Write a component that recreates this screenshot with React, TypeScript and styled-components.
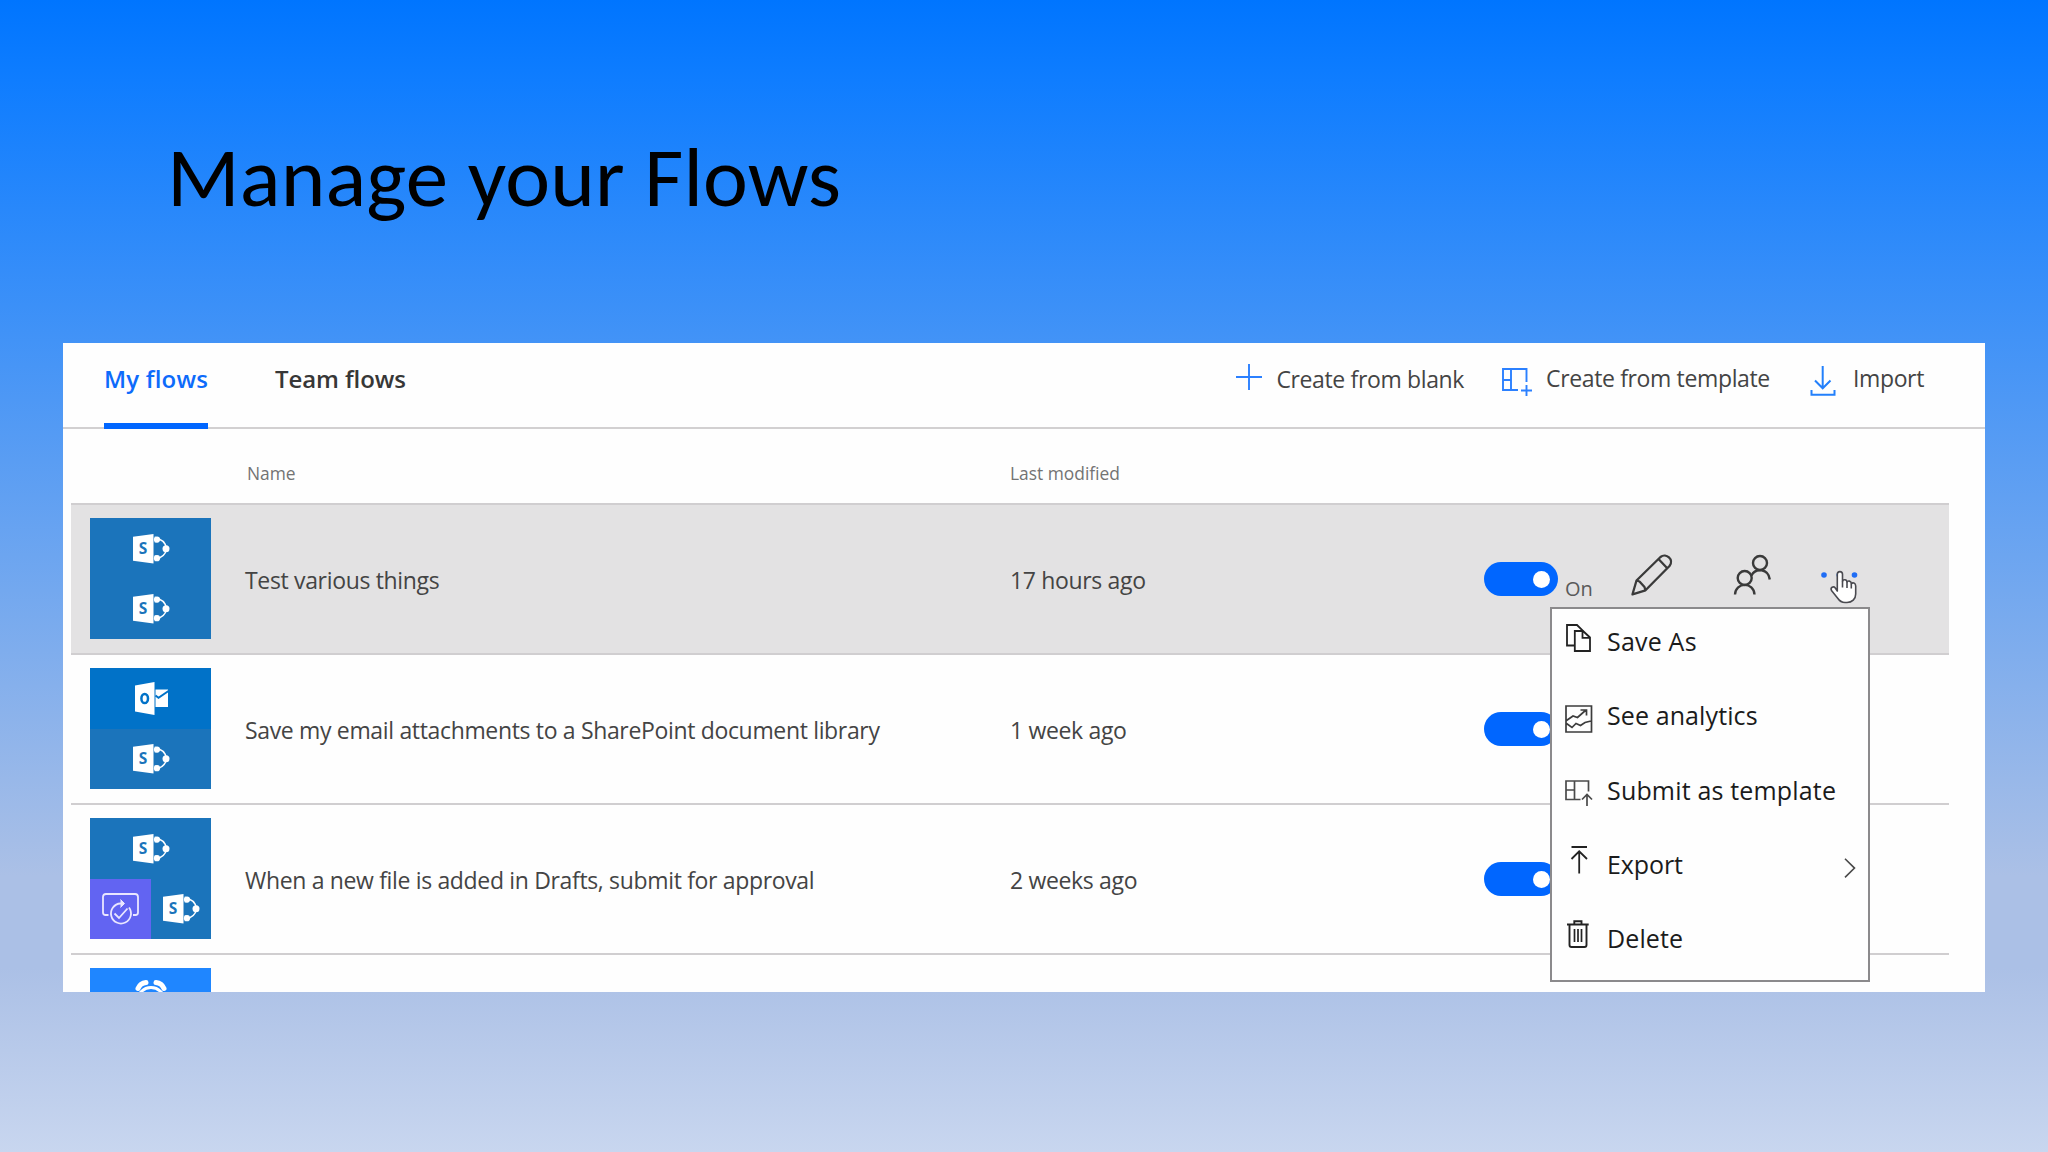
import React from "react";
import styled, { createGlobalStyle } from "styled-components";

const GlobalStyle = createGlobalStyle`
  * { box-sizing: border-box; }
  body { margin: 0; overflow: hidden; }
  svg { display: block; flex: none; overflow: visible; }
`;

const Slide = styled.main`
  display: flex;
  flex-direction: column;
  width: 2048px;
  height: 1152px;
  background: linear-gradient(180deg, #0075ff 0%, #0f7dff 7%, #abc0e6 76%, #abc0e6 84%, #c8d6ef 100%);
  font-family: "Open Sans", "Noto Sans", sans-serif;
  color: #444;
`;

const SlideHeader = styled.header`
  flex: none;
  height: 343px;
  padding: 125px 0 0 167px;
`;

const Title = styled.h1`
  margin: 0;
  font-family: Carlito, Lato, sans-serif;
  font-weight: 400;
  font-size: 85px;
  line-height: 104px;
  letter-spacing: 0.15px;
  color: #000;
  white-space: nowrap;
`;

const Panel = styled.section`
  position: relative;
  flex: none;
  display: flex;
  flex-direction: column;
  width: 1922px;
  height: 649px;
  margin-left: 63px;
  overflow: hidden;
  background: #fefefe;
`;

const TabBar = styled.nav`
  flex: none;
  display: flex;
  justify-content: space-between;
  height: 86px;
  padding: 0 61px 0 41px;
  border-bottom: 2px solid #d2d0d1;
`;

const Tabs = styled.div`
  display: flex;
  gap: 67px;
`;

const Tab = styled.div<{ $active?: boolean }>`
  height: 86px;
  padding-top: 20px;
  font-size: 24px;
  line-height: 32px;
  font-weight: 600;
  letter-spacing: ${(p) => (p.$active ? 0.2 : -0.1)}px;
  white-space: nowrap;
  color: ${(p) => (p.$active ? "#0d6bfb" : "#373737")};
  border-bottom: 6px solid ${(p) => (p.$active ? "#0066ff" : "transparent")};
`;

const Actions = styled.div`
  display: flex;
  align-items: flex-start;
  padding-top: 20px;
`;

const Action = styled.button<{ $gap: number; $before?: number }>`
  display: flex;
  align-items: flex-start;
  gap: ${(p) => p.$gap}px;
  margin: 0 0 0 ${(p) => p.$before ?? 0}px;
  padding: 0;
  border: 0;
  background: none;
  font: 400 23px/32px "Open Sans", "Noto Sans", sans-serif;
  letter-spacing: -0.36px;
  color: #444;
  white-space: nowrap;

  &:not(:first-child) { margin-top: -1px; }
`;

const columns = "174px 765px 474px 1fr";

const ColumnHeads = styled.div`
  flex: none;
  display: grid;
  grid-template-columns: ${columns};
  align-items: center;
  height: 74px;
  margin-left: 8px;
  padding-top: 14px;
  font-size: 17.4px;
  line-height: 24px;
  color: #737373;
`;

const HeadLabel = styled.span<{ $inset: number }>`
  padding-left: ${(p) => p.$inset}px;
`;

const Row = styled.div<{ $selected?: boolean }>`
  flex: none;
  display: grid;
  grid-template-columns: ${columns};
  align-items: center;
  width: 1878px;
  height: ${(p) => (p.$selected ? 152 : 150)}px;
  margin-left: 8px;
  border-bottom: 2px solid #d0ced0;
  border-top: ${(p) => (p.$selected ? "2px solid #d0ced0" : "0")};
  background: ${(p) => (p.$selected ? "#e3e2e3" : "transparent")};
`;

const Cell = styled.div`
  padding-top: 2px;
  font-size: 23px;
  line-height: 32px;
  letter-spacing: -0.34px;
  white-space: nowrap;
`;

const Tile = styled.div`
  display: flex;
  flex-wrap: wrap;
  width: 121px;
  height: 121px;
  margin: 0 0 1px 19px;
`;

const TileCell = styled.div<{ $color: string; $half?: boolean }>`
  display: flex;
  align-items: center;
  justify-content: center;
  width: ${(p) => (p.$half ? "50%" : "100%")};
  height: 50%;
  padding: 1px 0 0 1px;
  background: ${(p) => p.$color};
`;

const Controls = styled.div`
  display: flex;
  align-items: center;
  height: 100%;
`;

const Toggle = styled.span`
  flex: none;
  display: flex;
  align-items: center;
  justify-content: flex-end;
  width: 74px;
  height: 34px;
  padding-right: 8px;
  border-radius: 17px;
  background: #0066ff;

  &::after {
    content: "";
    width: 17px;
    height: 17px;
    border-radius: 50%;
    background: #fff;
  }
`;

const ToggleLabel = styled.span`
  width: 73px;
  padding: 19px 0 0 7px;
  font-size: 20px;
  line-height: 26px;
  color: #5a5a5a;
`;

const IconButton = styled.span<{ $width: number }>`
  display: flex;
  width: ${(p) => p.$width}px;
  padding-bottom: 8px;
`;

const Menu = styled.ul`
  position: absolute;
  left: 1487px;
  top: 264px;
  display: flex;
  flex-direction: column;
  gap: 34.3px;
  width: 320px;
  height: 375px;
  margin: 0;
  padding: 12px 12px 0 13px;
  list-style: none;
  background: #fefefe;
  border: 2px solid #8b8a8c;
`;

const MenuItem = styled.li<{ $iconShift: number }>`
  display: flex;
  align-items: center;
  gap: 14px;
  height: 40px;
  font-size: 25px;
  line-height: 40px;
  color: #1b1b1b;
  white-space: nowrap;

  > svg:first-child { margin-top: ${(p) => p.$iconShift * 2}px; }
`;

const MenuText = styled.span<{ $tracking: number }>`
  flex: 1;
  letter-spacing: ${(p) => p.$tracking}px;
`;

const Pointer = styled.span`
  position: absolute;
  left: 1766px;
  top: 226px;
`;

const Sharepoint = () => (
  <svg width="37" height="30" viewBox="0 0 37 30">
    <path d="M0 2.7 20.5 0v29.6L0 26.8Z" fill="#fff" />
    <text x="10" y="20.3" textAnchor="middle" fontFamily="Open Sans" fontWeight="700" fontSize="15.5" fill="#1b74bb">S</text>
    <path d="M22 4.4c6.5.3 10.5 4 11.5 10M22 24.8c6.500-.6 10.500-4.200 11.500-10" fill="none" stroke="#fff" strokeWidth="1.500" />
    <path d="M21.700 2.600a3 3 0 1 1 0 6ZM21.700 21.300a3 3 0 1 1 0 6Z" fill="#fff" />
    <circle cx="24" cy="5.600" r="3.100" fill="#fff" />
    <circle cx="24" cy="24.200" r="3.100" fill="#fff" />
    <circle cx="33" cy="14.700" r="3.500" fill="#fff" />
  </svg>
);

const Outlook = () => (
  <svg width="33" height="33" viewBox="0 0 33 33">
    <path d="M0 3.500 19.500 0v33L0 29.500Z" fill="#fff" />
    <ellipse cx="9.700" cy="16.500" rx="3.300" ry="4.600" fill="none" stroke="#0172c8" strokeWidth="2.500" />
    <path d="M20.500 7.500H33v17.500H20.500Z" fill="#fff" />
    <path d="M20.500 13.500 23.500 15.800 33.500 9" fill="none" stroke="#0172c8" strokeWidth="2" />
  </svg>
);

const Approval = () => (
  <svg width="37" height="32" viewBox="0 0 37 32" fill="none" stroke="#e9e6ff" strokeWidth="1.800">
    <path d="M6.500 22H3.500Q1 22 1 19.500V4Q1 1 4 1H33Q36 1 36 4V19.500Q36 22 33.500 22H31" />
    <path d="M20.500 10.500H18.500A10 10 0 1 0 27 14.500" />
    <path d="M18.500 6.500 22.500 10.500 18.500 14.500" fill="#e9e6ff" strokeWidth="1" />
    <path d="M12.500 20.500 17 25 25.500 15.500" />
  </svg>
);

const Alarm = () => (
  <svg width="36" height="38" viewBox="0 0 36 38" fill="none" stroke="#fff">
    <circle cx="18" cy="21" r="13.500" strokeWidth="3" />
    <path d="M5 8.500C6.500 5 9.500 3 13 2.600M31 8.500C29.500 5 26.500 3 23 2.600" strokeWidth="5" strokeLinecap="round" />
    <path d="M18 12v10l6 4" strokeWidth="2.500" />
  </svg>
);

const Plus = () => (
  <svg width="28" height="28" viewBox="0 0 28 28" stroke="#2b80ff" strokeWidth="1.900">
    <path d="M14 1V27M1 14H27" />
  </svg>
);

const NewTemplate = () => (
  <svg width="32" height="34" viewBox="0 0 32 34" fill="none" stroke="#2b80ff" strokeWidth="1.900">
    <path d="M18 28H3V7H26.500V20M11 7V28M3 18H11M26.500 23V34M21 28.500H32" />
  </svg>
);

const Download = () => (
  <svg width="26" height="34" viewBox="0 0 26 34" fill="none" stroke="#2380fb" strokeWidth="2">
    <path d="M12.700 4V26M5 18.500 12.700 26.300 20.500 18.500M1.500 28V32.700H24.500V28" />
  </svg>
);

const Pencil = () => (
  <svg width="42" height="42" viewBox="0 0 42 42" fill="none" stroke="#3a3a3a" strokeWidth="2.300" strokeLinejoin="round">
    <path d="M1.500 40.300 5.500 26.500 29.500 3C35 -1.500 43.500 5.500 38.500 12L14.500 36.300Z" />
    <path d="M5.500 26.500 8.500 27.500 13.500 33 14.500 36.300M27.500 5 36.500 14.500" />
  </svg>
);

const People = () => (
  <svg width="38" height="42" viewBox="0 0 38 42" fill="none" stroke="#3a3a3a" strokeWidth="2.400">
    <circle cx="27" cy="9" r="7" />
    <circle cx="11.700" cy="24" r="7" />
    <path d="M2 40.500C2.500 27.700 21 27.700 21.500 40.500M18.500 21.500C22.500 13.500 35.500 14.500 36.800 25.500" />
  </svg>
);

const Ellipsis = () => (
  <svg width="36" height="8" viewBox="0 0 36 8" fill="#1f6df5">
    <circle cx="3" cy="4" r="2.800" />
    <circle cx="18.300" cy="4" r="2.800" />
    <circle cx="33.500" cy="4" r="2.800" />
  </svg>
);

const Hand = () => (
  <svg width="30" height="36" viewBox="0 0 30 36" fill="#fff" stroke="#4a4a50" strokeWidth="1.600" strokeLinejoin="round">
    <path d="M8.300 22V5.300C8.300 1.700 13.500 1.700 13.500 5.300V12.500C14 10 18 10.200 18 13.300C18.800 11.300 22.300 11.600 22.300 14.800C23.500 13 26.700 13.800 26.700 17V25C26.700 30 23 33.500 18 33.500H16C12 33.500 10.500 32 8.500 29L2.500 21.500C1 18.500 4.500 16.800 6.300 19Z" />
    <path d="M13.500 12.500V18.500M18 13.300V19M22.300 14.800V19.500" fill="none" />
  </svg>
);

const Copy = () => (
  <svg width="28" height="28" viewBox="0 0 28 28" fill="none" stroke="#222" strokeWidth="1.800">
    <path d="M9 21.500H2V1H12L18 6.800" />
    <path d="M9.800 7H18L25 13.500V27H9.800ZM17.500 7V13.800H25" />
  </svg>
);

const Analytics = () => (
  <svg width="28" height="28" viewBox="0 0 28 28" fill="none" stroke="#3c3c3c" strokeWidth="1.700">
    <path d="M1 1H26.500V27H1ZM1.500 15.500 8 11 12.500 12.500 21 5M15.500 5H21.500V10.500M1.500 18.500 7 22.500 11 18.500 15.500 20.500 20 17.500 26 16" />
  </svg>
);

const SubmitTemplate = () => (
  <svg width="28" height="28" viewBox="0 0 28 28" fill="none" stroke="#4a4a4a" strokeWidth="1.700">
    <path d="M15.500 20.500H1V2H23.500V12.500M9.500 2V20.500M1 11H9.500M22 27V16M17 20.500 22 15.500 27 20.500" />
  </svg>
);

const Upload = () => (
  <svg width="28" height="28" viewBox="0 0 28 28" fill="none" stroke="#222" strokeWidth="1.800">
    <path d="M6.500 1H22M14.200 27.500V5.500M6.500 13 14.200 5.300 22 13" />
  </svg>
);

const Trash = () => (
  <svg width="28" height="28" viewBox="0 0 28 28" fill="none" stroke="#222" strokeWidth="1.900">
    <path d="M2 4.500H23.700M4.500 4.500V25Q4.500 27 6.500 27H19.500Q21.500 27 21.500 25V4.500M9.300 4.500V1.200H16.500V4.500" />
    <path d="M9.500 9V22M13 9V22M16.500 9V22" strokeWidth="1.700" />
  </svg>
);

const Chevron = () => (
  <svg width="12" height="20" viewBox="0 0 12 20" fill="none" stroke="#4a4a4a" strokeWidth="1.600">
    <path d="M1 4.800 10.500 14.100 1 23.400" />
  </svg>
);

const SP = "#1b74bb";

const flows = [
  {
    name: "Test various things",
    modified: "17 hours ago",
    selected: true,
    tile: [
      { color: SP, Icon: Sharepoint },
      { color: SP, Icon: Sharepoint },
    ],
  },
  {
    name: "Save my email attachments to a SharePoint document library",
    modified: "1 week ago",
    tile: [
      { color: "#0172c8", Icon: Outlook },
      { color: SP, Icon: Sharepoint },
    ],
  },
  {
    name: "When a new file is added in Drafts, submit for approval",
    modified: "2 weeks ago",
    tile: [
      { color: SP, Icon: Sharepoint },
      { color: "#6264f2", Icon: Approval, half: true },
      { color: SP, Icon: Sharepoint, half: true },
    ],
  },
  {
    name: "",
    modified: "",
    tile: [
      { color: "#1f86ff", Icon: Alarm },
      { color: "#1f86ff", Icon: null },
    ],
  },
] as {
  name: string;
  modified: string;
  selected?: boolean;
  tile: { color: string; Icon: React.FC | null; half?: boolean }[];
}[];

const menu = [
  { label: "Save As", Icon: Copy, shift: -3.2, tracking: 0.2 },
  { label: "See analytics", Icon: Analytics, shift: 3.7, tracking: 0.1 },
  { label: "Submit as template", Icon: SubmitTemplate, shift: 3, tracking: 0.17 },
  { label: "Export", Icon: Upload, shift: -3.8, tracking: -0.1, nested: true },
  { label: "Delete", Icon: Trash, shift: -3.8, tracking: 0.1 },
];

export default function App() {
  return (
    <Slide>
      <GlobalStyle />
      <SlideHeader>
        <Title>Manage your Flows</Title>
      </SlideHeader>
      <Panel>
        <TabBar>
          <Tabs>
            <Tab $active>My flows</Tab>
            <Tab>Team flows</Tab>
          </Tabs>
          <Actions>
            <Action $gap={13}><Plus />Create from blank</Action>
            <Action $gap={14} $before={36}><NewTemplate />Create from template</Action>
            <Action $gap={17} $before={40}><Download />Import</Action>
          </Actions>
        </TabBar>
        <ColumnHeads>
          <i />
          <HeadLabel $inset={2}>Name</HeadLabel>
          <HeadLabel $inset={-0}>Last modified</HeadLabel>
        </ColumnHeads>
        {flows.map((flow, i) => (
          <Row key={i} $selected={flow.selected}>
            <Tile>
              {flow.tile.map(({ color, Icon, half }, j) => (
                <TileCell key={j} $color={color} $half={half}>{Icon && <Icon />}</TileCell>
              ))}
            </Tile>
            <Cell>{flow.name}</Cell>
            <Cell>{flow.modified}</Cell>
            {flow.name && (
              <Controls>
                <Toggle />
                <ToggleLabel>On</ToggleLabel>
                {flow.selected && (
                  <>
                    <IconButton $width={102}><Pencil /></IconButton>
                    <IconButton $width={88}><People /></IconButton>
                    <IconButton $width={36}><Ellipsis /></IconButton>
                  </>
                )}
              </Controls>
            )}
          </Row>
        ))}
        <Menu>
          {menu.map(({ label, Icon, shift, tracking, nested }) => (
            <MenuItem key={label} $iconShift={shift}>
              <Icon />
              <MenuText $tracking={tracking}>{label}</MenuText>
              {nested && <Chevron />}
            </MenuItem>
          ))}
        </Menu>
        <Pointer><Hand /></Pointer>
      </Panel>
    </Slide>
  );
}
